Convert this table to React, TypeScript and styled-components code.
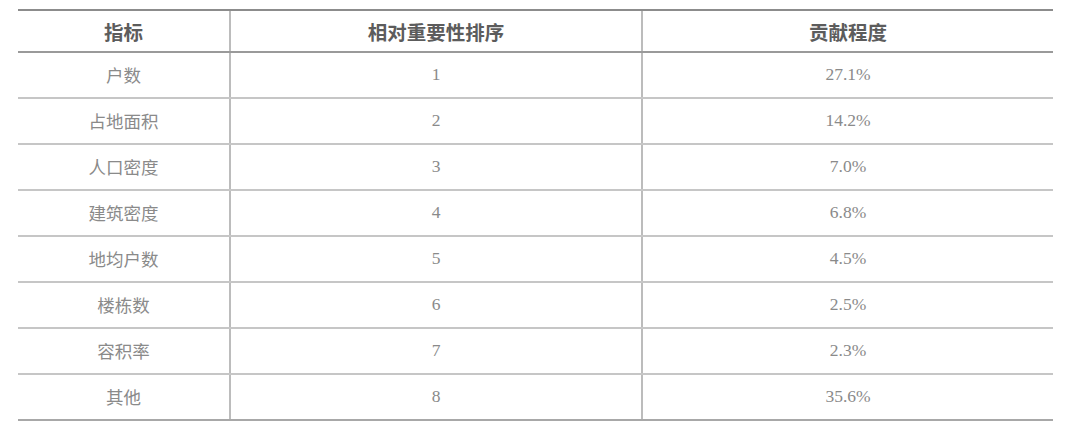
import React from "react";
import styled, { createGlobalStyle } from "styled-components";

const Global = createGlobalStyle`
  html, body { margin: 0; padding: 0; background: #ffffff; }
  body { font-family: "Liberation Serif", "Noto Sans CJK SC", serif; }
`;

const Table = styled.div`
  margin: 9px 0 0 18px;
  width: 1035px;
  border-top: 2px solid #8c8c8c;
`;

const Row = styled.div<{ $head?: boolean; $last?: boolean }>`
  display: grid;
  grid-template-columns: 213px 412px 1fr;
  height: ${(p) => (p.$head ? 42 : 46)}px;
  box-sizing: border-box;
  border-bottom: 2px solid
    ${(p) => (p.$head ? "#9a9a9a" : p.$last ? "#a8a8a8" : "#c6c6c6")};
`;

const Cell = styled.div<{ $head?: boolean; $divider?: boolean }>`
  display: flex;
  align-items: center;
  justify-content: center;
  border-right: ${(p) => (p.$divider ? "2px solid #bcbcbc" : "none")};
  font-family: "Liberation Serif", "Noto Sans CJK SC", serif;
  font-size: ${(p) => (p.$head ? "19.5px" : "17.5px")};
  font-weight: ${(p) => (p.$head ? 600 : 400)};
  color: ${(p) => (p.$head ? "#5c5c5c" : "#8a8a8a")};
  padding-bottom: ${(p) => (p.$head ? "0" : "2px")};
`;

const data: [string, string, string][] = [
  ["户数", "1", "27.1%"],
  ["占地面积", "2", "14.2%"],
  ["人口密度", "3", "7.0%"],
  ["建筑密度", "4", "6.8%"],
  ["地均户数", "5", "4.5%"],
  ["楼栋数", "6", "2.5%"],
  ["容积率", "7", "2.3%"],
  ["其他", "8", "35.6%"],
];

export default function App() {
  return (
    <>
      <Global />
      <Table>
        <Row $head>
          <Cell $head $divider>指标</Cell>
          <Cell $head $divider>相对重要性排序</Cell>
          <Cell $head>贡献程度</Cell>
        </Row>
        {data.map(([a, b, c], i) => (
          <Row key={a} $last={i === data.length - 1}>
            <Cell $divider>{a}</Cell>
            <Cell $divider>{b}</Cell>
            <Cell>{c}</Cell>
          </Row>
        ))}
      </Table>
    </>
  );
}
